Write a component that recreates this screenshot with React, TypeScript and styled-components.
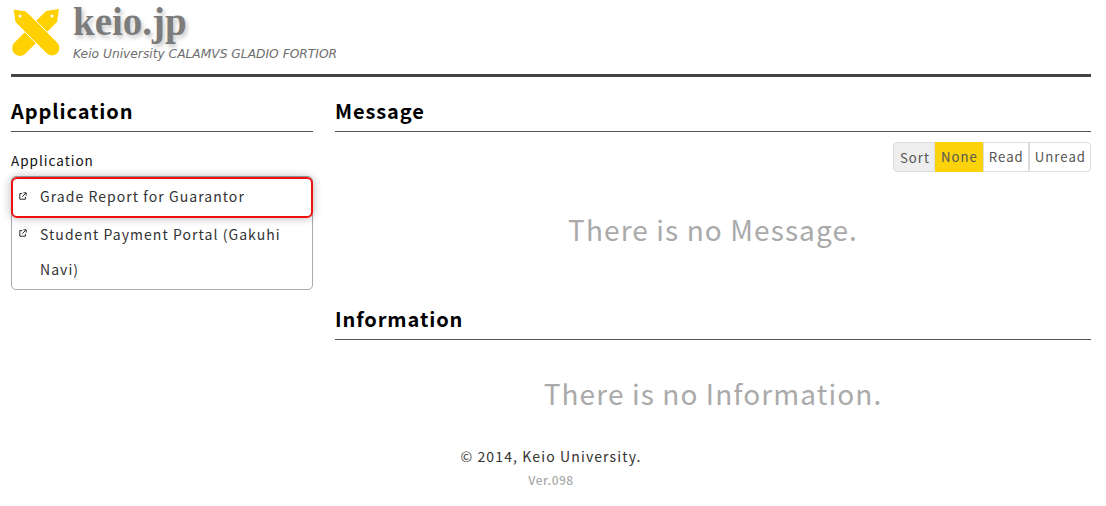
import React from "react";
import styled, { createGlobalStyle } from "styled-components";

const GlobalStyle = createGlobalStyle`
	html, body {
		margin: 0;
		padding: 0;
		background: #fff;
	}
	body {
		font-family: "Noto Sans CJK JP", "Noto Sans", sans-serif;
		color: #222;
	}
`;

const SORT_OPTIONS = ["None", "Read", "Unread"];
const PEN_PATH = "M1 1 L14 3 L46 35 A7.8 7.8 0 0 1 35 46 L3 14 Z";

const App = () => {
	return (
		<Page>
			<GlobalStyle />
			<Header>
				<Logo viewBox="0 0 48 48">
					<path d={PEN_PATH} fill="#ffd100" transform="translate(48 0) scale(-1 1)" />
					<circle cx="40" cy="8" r="1.5" fill="#fff" />
					<path d={PEN_PATH} fill="#ffd100" stroke="#fff" strokeWidth="1" />
					<circle cx="8" cy="8" r="1.5" fill="#fff" />
				</Logo>
				<Brand>
					<BrandName>keio.jp</BrandName>
					<BrandMotto>Keio University CALAMVS GLADIO FORTIOR</BrandMotto>
				</Brand>
			</Header>
			<Columns>
				<Sidebar>
					<SectionTitle>Application</SectionTitle>
					<GroupLabel>Application</GroupLabel>
					<LinkList>
						<LinkItem $active>
							<LinkIcon />
							<span>Grade Report for Guarantor</span>
						</LinkItem>
						<LinkItem>
							<LinkIcon />
							<span>Student Payment Portal (Gakuhi Navi)</span>
						</LinkItem>
					</LinkList>
				</Sidebar>
				<Main>
					<SectionTitle>Message</SectionTitle>
					<SortBar>
						<SortLabel>Sort</SortLabel>
						{SORT_OPTIONS.map((option) => (
							<SortButton key={option} $selected={option === "None"}>
								{option}
							</SortButton>
						))}
					</SortBar>
					<EmptyMessage>There is no Message.</EmptyMessage>
					<SectionTitle>Information</SectionTitle>
					<EmptyInformation>There is no Information.</EmptyInformation>
				</Main>
			</Columns>
			<Footer>
				<Copyright>© 2014, Keio University.</Copyright>
				<Version>Ver.098</Version>
			</Footer>
		</Page>
	);
};

const LinkIcon = () => (
	<IconSvg viewBox="0 0 10 10">
		<path d="M4 2 H1 V9 H8 V6" fill="none" stroke="#222" strokeWidth="1.2" />
		<path d="M4 6 L8.5 1.5 M5.5 1 H9 V4.5" fill="none" stroke="#222" strokeWidth="1.2" />
	</IconSvg>
);

export default App;

const Page = styled.div`
	width: 1080px;
	margin: 0 0 0 11px;
`;

const Header = styled.header`
	display: flex;
	height: 74px;
	border-bottom: 3px solid #444;
	box-sizing: content-box;
`;

const Logo = styled.svg`
	width: 48px;
	height: 48px;
	margin: 8px 0 0 1px;
	flex: none;
`;

const Brand = styled.div`
	margin-left: 13px;
	display: flex;
	flex-direction: column;
`;

const BrandName = styled.div`
	font-family: "Liberation Serif", serif;
	font-weight: 700;
	font-size: 39px;
	line-height: 44px;
	color: #7c7c7c;
	text-shadow: 2px 3px 4px #c8c8c8;
`;

const BrandMotto = styled.div`
	margin-top: 2px;
	font-family: "DejaVu Sans", sans-serif;
	font-style: italic;
	font-size: 12.25px;
	line-height: 16px;
	color: #6e6e6e;
	white-space: nowrap;
`;

const Columns = styled.div`
	display: flex;
	gap: 22px;
`;

const Sidebar = styled.aside`
	width: 302px;
	flex: none;
`;

const Main = styled.main`
	flex: 1;
	min-width: 0;
`;

const SectionTitle = styled.h2`
	margin: 0;
	height: 55px;
	box-sizing: border-box;
	padding-top: 19px;
	font-size: 20px;
	line-height: 30px;
	font-weight: 700;
	letter-spacing: 0.9px;
	color: #000;
	border-bottom: 1px solid #555;
`;

const GroupLabel = styled.div`
	margin-top: 18px;
	font-size: 13.5px;
	line-height: 20px;
	letter-spacing: 1px;
	color: #111;
`;

const LinkList = styled.div`
	margin-top: 6px;
	padding-bottom: 2px;
	border: 1px solid #aaa;
	border-radius: 5px;
`;

const LinkItem = styled.a<{ $active?: boolean }>`
	display: flex;
	box-sizing: border-box;
	padding: ${(props) => (props.$active ? "0 6px" : "0 7px")};
	margin: ${(props) => (props.$active ? "0 -1px -1px" : "0")};
	font-size: 14px;
	line-height: 35px;
	letter-spacing: 1.05px;
	color: #333;
	border: ${(props) => (props.$active ? "2px solid #ee1111" : "none")};
	border-radius: ${(props) => (props.$active ? "6px" : "0")};
	box-shadow: ${(props) => (props.$active ? "0 0 10px rgba(0, 0, 0, 0.3)" : "none")};
	height: ${(props) => (props.$active ? "41px" : "auto")};
	svg {
		margin-top: ${(props) => (props.$active ? "13px" : "12px")};
	}
	span {
		margin-left: 13px;
	}
`;

const IconSvg = styled.svg`
	width: 8px;
	height: 8px;
	flex: none;
`;

const SortBar = styled.div`
	display: flex;
	justify-content: flex-end;
	margin-top: 10px;
	height: 30px;
`;

const SortLabel = styled.div`
	box-sizing: border-box;
	height: 30px;
	padding: 0 4px 0 6px;
	font-size: 13.2px;
	line-height: 29px;
	letter-spacing: 1px;
	color: #555;
	background: #eee;
	border: 1px solid #ddd;
	border-radius: 4px 0 0 4px;
`;

const SortButton = styled.button<{ $selected?: boolean }>`
	box-sizing: border-box;
	height: 30px;
	padding: 0 4px 0 5px;
	font-family: inherit;
	font-size: 13.2px;
	line-height: 28px;
	letter-spacing: 1px;
	color: #555;
	background: ${(props) => (props.$selected ? "#fcd20a" : "#fff")};
	border: 1px solid ${(props) => (props.$selected ? "#fcd20a" : "#ddd")};
	&:last-child {
		border-radius: 0 4px 4px 0;
	}
`;

const EmptyMessage = styled.p`
	margin: 0;
	height: 113px;
	padding-top: 37px;
	box-sizing: border-box;
	text-align: center;
	font-size: 28px;
	line-height: 40px;
	letter-spacing: 1.1px;
	color: #aaa;
`;

const EmptyInformation = styled(EmptyMessage)`
	height: 106px;
	padding-top: 33px;
`;

const Footer = styled.footer`
	width: 1080px;
	text-align: center;
`;

const Copyright = styled.div`
	font-size: 14px;
	line-height: 20px;
	letter-spacing: 1.12px;
	color: #333;
`;

const Version = styled.div`
	margin-top: 4px;
	font-size: 12px;
	line-height: 20px;
	font-weight: 500;
	letter-spacing: 0.5px;
	color: #aaa;
`;
